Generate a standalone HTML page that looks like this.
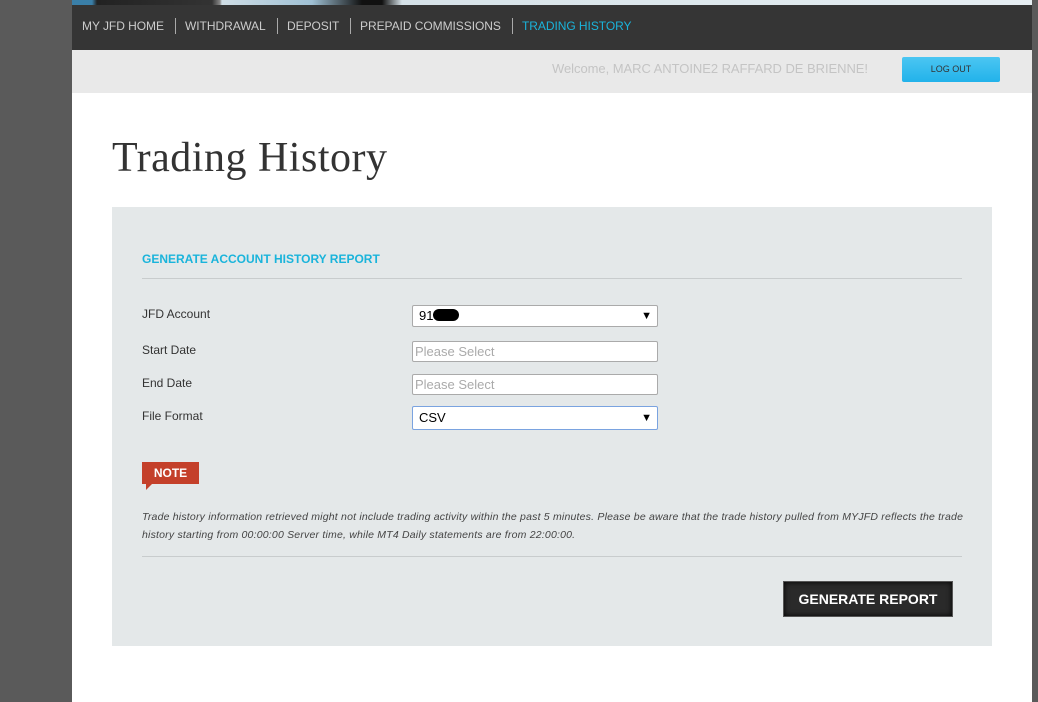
<!DOCTYPE html><html><head><style>
body{margin:0;width:1038px;height:702px;background:#5a5a5a;position:relative;overflow:hidden;font-family:"Liberation Sans",Arial,sans-serif}
.main{position:absolute;left:72px;top:0;width:960px;height:702px;background:#fff}
.strip{position:absolute;left:0;top:0;width:960px;height:5px;background:linear-gradient(90deg,#3a7fa8 0,#3a7fa8 20px,#222 25px,#333 140px,#888 148px,#cfdde5 150px,#9fc0d4 240px,#111 290px,#111 310px,#d6e2e8 330px,#e6eef2 960px)}
.nav{position:absolute;left:0;top:5px;width:960px;height:45px;background:#353535;font-size:12px;letter-spacing:-0.05px;color:#ccc}
.nav span{position:absolute;top:14px}
.sep{position:absolute;top:13px;width:1px;height:16px;background:#aaa}
.bar{position:absolute;left:0;top:50px;width:960px;height:43px;background:#e9e9e9}
.welcome{position:absolute;left:480px;top:11px;font-size:13px;color:#c4c4c4;letter-spacing:-0.05px}
.logout{position:absolute;left:830px;top:7px;width:98px;height:25px;background:linear-gradient(#4bc6f2,#22b2ea);border-radius:2px;font-size:9px;color:#333;text-align:center;line-height:25px}
h1{position:absolute;left:40px;top:134px;margin:0;font-family:"Liberation Serif",serif;font-weight:normal;font-size:42px;color:#333;letter-spacing:0.5px}
.panel{position:absolute;left:40px;top:207px;width:880px;height:439px;background:#e4e8e9}
.hd{position:absolute;left:30px;top:45px;font-size:12px;font-weight:bold;color:#1ab4db}
.hr{position:absolute;left:30px;width:820px;height:1px;background:#c8cccd}
.lbl{position:absolute;left:30px;font-size:12px;color:#333}
.inp{position:absolute;left:300px;width:246px;background:#fff;border:1px solid #aaa;border-radius:2px;font-size:13px;color:#aaa;padding-left:2px;box-sizing:border-box}
.arr{position:absolute;right:5px;font-size:11px;color:#000}
.note{position:absolute;left:30px;top:255px;width:57px;height:22px;background:#c4402a;color:#fff;font-weight:bold;font-size:12px;text-align:center;line-height:22px}
.note:after{content:"";position:absolute;left:4px;top:22px;border-left:6px solid #c4402a;border-bottom:6px solid transparent}
.txt{position:absolute;left:30px;top:301px;width:824px;font-size:10.5px;letter-spacing:0.2px;font-style:italic;color:#444;line-height:18px}
.btn{position:absolute;left:671px;top:374px;width:170px;height:36px;background:#2a2a2a;box-shadow:inset 0 0 6px #000;border:1px solid #555;box-sizing:border-box;color:#fff;font-weight:bold;font-size:14px;text-align:center;line-height:34px}
</style></head><body>
<div class="main">
<div class="strip"></div>
<div class="nav">
<span style="left:10px">MY JFD HOME</span><div class="sep" style="left:103px"></div>
<span style="left:113px">WITHDRAWAL</span><div class="sep" style="left:205px"></div>
<span style="left:215px">DEPOSIT</span><div class="sep" style="left:278px"></div>
<span style="left:288px">PREPAID COMMISSIONS</span><div class="sep" style="left:440px"></div>
<span style="left:450px;color:#1ab4db">TRADING HISTORY</span>
</div>
<div class="bar"><div class="welcome">Welcome, MARC ANTOINE2 RAFFARD DE BRIENNE!</div><div class="logout">LOG OUT</div></div>
<h1>Trading History</h1>
<div class="panel">
<div class="hd">GENERATE ACCOUNT HISTORY REPORT</div>
<div class="hr" style="top:71px"></div>
<div class="lbl" style="top:100px">JFD Account</div>
<div class="lbl" style="top:136px">Start Date</div>
<div class="lbl" style="top:169px">End Date</div>
<div class="lbl" style="top:202px">File Format</div>
<div class="inp" style="top:98px;height:22px;line-height:20px;color:#000;padding-left:6px">91<span style="display:inline-block;width:26px;height:12px;background:#000;border-radius:6px;vertical-align:-1px"></span><span class="arr">▼</span></div>
<div class="inp" style="top:134px;height:21px;line-height:19px">Please Select</div>
<div class="inp" style="top:167px;height:21px;line-height:19px">Please Select</div>
<div class="inp" style="top:199px;height:24px;line-height:22px;color:#000;padding-left:6px;border-color:#7aa3e0">CSV<span class="arr">▼</span></div>
<div class="note">NOTE</div>
<div class="txt">Trade history information retrieved might not include trading activity within the past 5 minutes. Please be aware that the trade history pulled from MYJFD reflects the trade history starting from 00:00:00 Server time, while MT4 Daily statements are from 22:00:00.</div>
<div class="hr" style="top:349px"></div>
<div class="btn">GENERATE REPORT</div>
</div>
</div>
</body></html>
